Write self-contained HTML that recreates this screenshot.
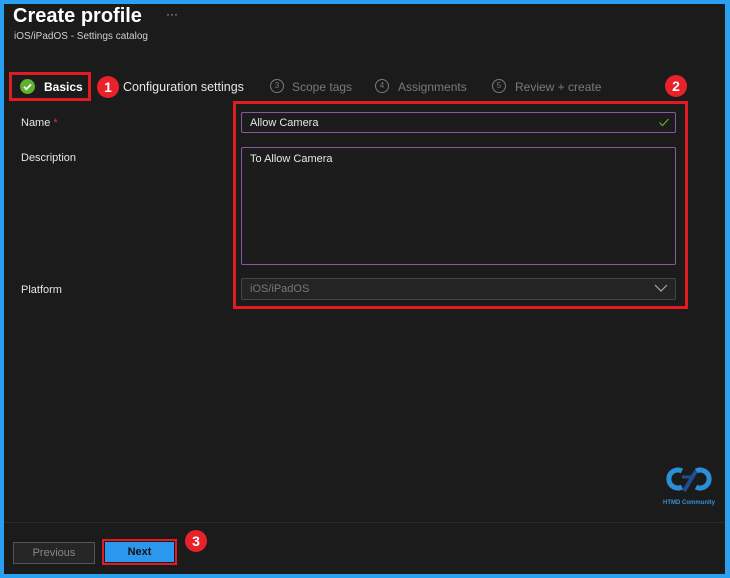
<!DOCTYPE html>
<html><head><style>
*{margin:0;padding:0;box-sizing:border-box}
body{width:730px;height:578px;background:#2aa0f0;position:relative;overflow:hidden;font-family:"Liberation Sans",sans-serif}
#p{position:absolute;left:4px;top:4px;width:721px;height:570px;background:#1b1b1b}
.a{position:absolute}
.t{color:#e6e6e6;font-size:11px}
.g{color:#7a7a7a;font-size:12px}
.num{position:absolute;width:14px;height:14px;border:1px solid #7a7a7a;border-radius:50%;color:#7a7a7a;font-size:8px;text-align:center;line-height:12px}
.red{position:absolute;border-radius:50%;background:#e8212b;color:#fff;font-weight:bold;font-size:14px;text-align:center;width:22px;height:22px;line-height:22px}
.box{position:absolute;border:3px solid #e11b22}
.in{position:absolute;border:1px solid #8a58a0;border-radius:2px;background:#1c1c1c;color:#e6e6e6;font-size:11px;padding-left:8px}
</style></head><body>
<div id="p"></div>
<div class="a" style="left:13px;top:5px;color:#fff;font-size:20px;font-weight:bold">Create profile</div>
<div class="a" style="left:166px;top:7px;color:#bbb;font-size:12px">···</div>
<div class="a" style="left:14px;top:31px;color:#cfcfcf;font-size:10px">iOS/iPadOS - Settings catalog</div>

<div class="box" style="left:9px;top:72px;width:82px;height:29px"></div>
<div class="a" style="left:20px;top:79px;width:15px;height:15px;border-radius:50%;background:#5db12c"></div>
<svg class="a" style="left:20px;top:79px" width="15" height="15"><path d="M4 7.8l2.4 2.4 4.6-4.8" stroke="#fff" stroke-width="1.8" fill="none"/></svg>
<div class="a" style="left:44px;top:80px;color:#fff;font-size:12px;font-weight:bold">Basics</div>
<div class="red" style="left:97px;top:76px">1</div>
<div class="a" style="left:123px;top:80px;color:#e6e6e6;font-size:12.5px">Configuration settings</div>
<div class="num" style="left:270px;top:79px">3</div><div class="a g" style="left:292px;top:80px">Scope tags</div>
<div class="num" style="left:375px;top:79px">4</div><div class="a g" style="left:398px;top:80px">Assignments</div>
<div class="num" style="left:492px;top:79px">5</div><div class="a g" style="left:515px;top:80px">Review + create</div>
<div class="red" style="left:665px;top:75px">2</div>

<div class="a t" style="left:21px;top:117px">Name <span style="color:#e0343a">*</span></div>
<div class="a t" style="left:21px;top:152px">Description</div>
<div class="a t" style="left:21px;top:284px">Platform</div>

<div class="box" style="left:233px;top:101px;width:455px;height:208px"></div>
<div class="in" style="left:241px;top:112px;width:435px;height:21px;line-height:20px">Allow Camera</div>
<svg class="a" style="left:658px;top:116px" width="12" height="12"><path d="M1.5 6.5l3 3 6-6.5" stroke="#6da83a" stroke-width="1.2" fill="none"/></svg>
<div class="in" style="left:241px;top:147px;width:435px;height:118px;padding-top:5px">To Allow Camera</div>
<div class="in" style="left:241px;top:278px;width:435px;height:22px;line-height:21px;border-color:#454545;background:#242424;color:#777">iOS/iPadOS</div>
<svg class="a" style="left:654px;top:283px" width="14" height="10"><path d="M1 2l6 6 6-6" stroke="#aaa" stroke-width="1.2" fill="none"/></svg>

<svg class="a" style="left:662px;top:465px" width="54" height="30"><path d="M20 6a9 9 0 1 0 0 16" stroke="#2a8fd6" stroke-width="5" fill="none"/><path d="M34 6a9 9 0 1 1 0 16" stroke="#2a8fd6" stroke-width="5" fill="none"/><path d="M22 26l12-20" stroke="#1e4f8f" stroke-width="4"/><path d="M20 12h10" stroke="#1e4f8f" stroke-width="3"/></svg>
<div class="a" style="left:663px;top:500px;color:#3a8fd6;font-size:6px;font-weight:bold">HTMD Community</div>

<div class="a" style="left:4px;top:522px;width:721px;height:1px;background:#2c2c2c"></div>
<div class="a" style="left:13px;top:542px;width:82px;height:22px;border:1px solid #555;background:#262626;color:#888;font-size:11px;text-align:center;line-height:20px">Previous</div>
<div class="box" style="left:102px;top:539px;width:75px;height:26px;border-width:2px"></div>
<div class="a" style="left:105px;top:542px;width:69px;height:20px;background:#2b98f0;color:#111;font-size:11px;font-weight:bold;text-align:center;line-height:21px">Next</div>
<div class="red" style="left:185px;top:530px">3</div>
</body></html>
